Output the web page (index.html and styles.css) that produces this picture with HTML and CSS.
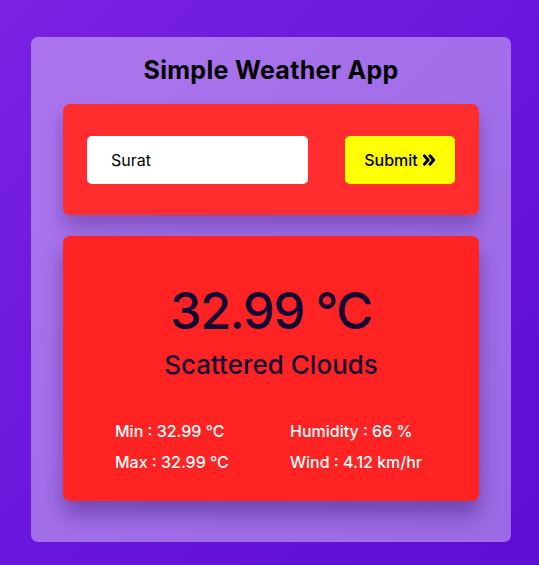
FILE: index.html
```html
<!DOCTYPE html>
<html>
<head>
<meta charset="utf-8">
<link rel="stylesheet" href="styles.css">
</head>
<body>
<div class="app">
  <h1 class="title">Simple Weather App</h1>
  <form class="search">
    <input class="city" type="text" value="Surat">
    <button class="submit" type="button">Submit
      <svg class="chev" viewBox="0 0 14 12" width="13" height="12"><path d="M1.5 1.5 L5.5 6 L1.5 10.5 M7.5 1.5 L11.5 6 L7.5 10.5" fill="none" stroke="#000" stroke-width="3.2" stroke-linecap="round" stroke-linejoin="round"/></svg>
    </button>
  </form>
  <div class="weather">
    <div class="temp">32.99 °C</div>
    <div class="desc">Scattered Clouds</div>
    <div class="details">
      <div>Min : 32.99 °C</div>
      <div>Humidity : 66 %</div>
      <div>Max : 32.99 °C</div>
      <div>Wind : 4.12 km/hr</div>
    </div>
  </div>
</div>
</body>
</html>
```
FILE: styles.css
```css
* { box-sizing: border-box; }
html, body { height: 100%; }
body {
  margin: 0;
  padding: 37px 0 0 31px;
  background: linear-gradient(135deg, #7a22e2 0%, #6a16dc 50%, #5c0ed2 100%);
  font-family: Inter, "Open Sans", sans-serif;
}
.app {
  width: 480px;
  height: 505px;
  background: rgba(255, 255, 255, 0.38);
  border-radius: 7px;
  padding: 18px 32px 0;
}
.title {
  margin: 0 0 19px;
  text-align: center;
  font-size: 25px;
  font-weight: 700;
  letter-spacing: 0.3px;
  line-height: 30px;
  color: #000;
}
.search {
  height: 111px;
  background: #ff2d2d;
  border-radius: 7px;
  padding: 32px 24px;
  display: flex;
  justify-content: space-between;
  align-items: center;
  box-shadow: 0 12px 18px rgba(40, 10, 90, 0.3);
  margin: 0 0 21px;
}
.city {
  width: 221px;
  height: 48px;
  border: none;
  border-radius: 5px;
  background: #fff;
  padding: 0 24px;
  font-family: inherit;
  font-size: 16px;
  color: #000;
  outline: none;
}
.submit {
  width: 110px;
  height: 48px;
  border: none;
  border-radius: 5px;
  background: #ffff00;
  font-family: inherit;
  font-size: 16px;
  font-weight: 500;
  color: #000;
  display: flex;
  align-items: center;
  justify-content: center;
  gap: 5px;
  padding: 0;
}
.chev { display: block; }
.weather {
  height: 265px;
  background: #ff2323;
  border-radius: 7px;
  box-shadow: 0 14px 20px rgba(40, 10, 90, 0.38);
  padding-top: 42px;
  text-align: center;
  color: #150535;
}
.temp {
  font-size: 51px;
  font-weight: 500;
  letter-spacing: -1.8px;
  line-height: 66px;
}
.desc {
  font-size: 26px;
  font-weight: 500;
  line-height: 30px;
  margin-top: 6px;
}
.details {
  margin-top: 40px;
  display: grid;
  grid-template-columns: 175px auto;
  row-gap: 9px;
  padding-left: 52px;
  text-align: left;
  color: #fff;
  font-size: 16px;
  font-weight: 500;
  line-height: 22px;
}
```
